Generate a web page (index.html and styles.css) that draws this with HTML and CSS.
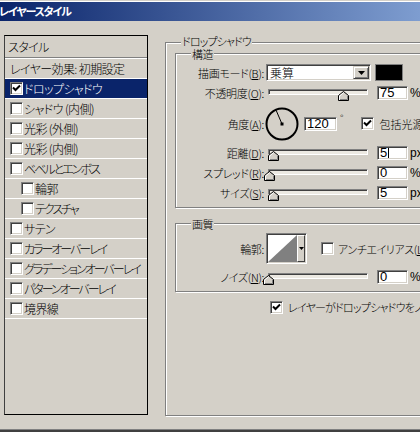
FILE: index.html
```html
<!DOCTYPE html>
<html lang="ja">
<head>
<meta charset="utf-8">
<title>レイヤースタイル</title>
<link rel="stylesheet" href="styles.css">
</head>
<body>
<div class="window">
  <div class="titlebar"><span class="title">レイヤースタイル</span></div>
  <div class="main">
    <div class="styles-panel">
      <div class="panel-head">スタイル</div>
      <ul class="style-list">
        <li class="item plain">レイヤー効果: 初期設定</li>
        <li class="item selected"><span class="cb"><svg width="11" height="11" viewBox="0 0 11 11"><polyline points="2,4.5 4.5,7 9,2.5" fill="none" stroke="#000" stroke-width="2"/></svg></span>ドロップシャドウ</li>
        <li class="item"><span class="cb"></span>シャドウ&nbsp;(内側)</li>
        <li class="item"><span class="cb"></span>光彩&nbsp;(外側)</li>
        <li class="item"><span class="cb"></span>光彩&nbsp;(内側)</li>
        <li class="item kana"><span class="cb"></span>ベベルとエンボス</li>
        <li class="item indent"><span class="cb"></span>輪郭</li>
        <li class="item indent kana"><span class="cb"></span>テクスチャ</li>
        <li class="item"><span class="cb"></span>サテン</li>
        <li class="item kana"><span class="cb"></span>カラーオーバーレイ</li>
        <li class="item kana"><span class="cb"></span>グラデーションオーバーレイ</li>
        <li class="item kana"><span class="cb"></span>パターンオーバーレイ</li>
        <li class="item"><span class="cb"></span>境界線</li>
      </ul>
    </div>

    <div class="settings">
      <div class="group outer">
        <span class="legend">ドロップシャドウ</span>

        <div class="group structure">
          <span class="legend">構造</span>

          <div class="row row-mode">
            <span class="lbl">描画モード(<u>B</u>):</span>
            <div class="select">
              <span class="select-value">乗算</span>
              <span class="drop-btn"><svg width="7" height="4" viewBox="0 0 7 4"><polygon points="0,0 7,0 3.5,4" fill="#000"/></svg></span>
            </div>
            <span class="swatch"></span>
          </div>

          <div class="row row-slider first">
            <span class="lbl">不透明度(<u>O</u>):</span>
            <div class="slider">
              <div class="track"></div>
              <span class="thumb" style="left:75%"><svg width="11" height="10" viewBox="0 0 11 10"><polygon points="0.5,9.5 0.5,4.5 5.5,0.5 10.5,4.5 10.5,9.5" fill="#d4d0c8" stroke="#000"/><polyline points="1.5,9 1.5,5 5.5,1.8" fill="none" stroke="#fff"/><polyline points="2,8.5 9.5,8.5 9.5,5" fill="none" stroke="#808080"/></svg></span>
            </div>
            <span class="field">75</span>
            <span class="unit">%</span>
          </div>

          <div class="row row-angle">
            <span class="lbl">角度(<u>A</u>):</span>
            <svg class="dial" width="34" height="34" viewBox="0 0 34 34"><circle cx="17" cy="17" r="15.5" fill="none" stroke="#000" stroke-width="2"/><line x1="17" y1="17" x2="11" y2="3" stroke="#000" stroke-width="1"/><rect x="15.5" y="15.5" width="3" height="3" fill="#000"/></svg>
            <span class="field angle">120</span>
            <span class="deg">°</span>
            <span class="cb global"><svg width="11" height="11" viewBox="0 0 11 11"><polyline points="2,4.5 4.5,7 9,2.5" fill="none" stroke="#000" stroke-width="2"/></svg></span>
            <span class="cb-text">包括光源を使用</span>
          </div>

          <div class="row row-slider">
            <span class="lbl">距離(<u>D</u>):</span>
            <div class="slider">
              <div class="track"></div>
              <span class="thumb" style="left:5%"><svg width="11" height="10" viewBox="0 0 11 10"><polygon points="0.5,9.5 0.5,4.5 5.5,0.5 10.5,4.5 10.5,9.5" fill="#d4d0c8" stroke="#000"/><polyline points="1.5,9 1.5,5 5.5,1.8" fill="none" stroke="#fff"/><polyline points="2,8.5 9.5,8.5 9.5,5" fill="none" stroke="#808080"/></svg></span>
            </div>
            <span class="field">5<span class="caret"></span></span>
            <span class="unit">px</span>
          </div>

          <div class="row row-slider">
            <span class="lbl">スプレッド(<u>R</u>):</span>
            <div class="slider">
              <div class="track"></div>
              <span class="thumb" style="left:1%"><svg width="11" height="10" viewBox="0 0 11 10"><polygon points="0.5,9.5 0.5,4.5 5.5,0.5 10.5,4.5 10.5,9.5" fill="#d4d0c8" stroke="#000"/><polyline points="1.5,9 1.5,5 5.5,1.8" fill="none" stroke="#fff"/><polyline points="2,8.5 9.5,8.5 9.5,5" fill="none" stroke="#808080"/></svg></span>
            </div>
            <span class="field">0</span>
            <span class="unit">%</span>
          </div>

          <div class="row row-slider">
            <span class="lbl">サイズ(<u>S</u>):</span>
            <div class="slider">
              <div class="track"></div>
              <span class="thumb" style="left:5%"><svg width="11" height="10" viewBox="0 0 11 10"><polygon points="0.5,9.5 0.5,4.5 5.5,0.5 10.5,4.5 10.5,9.5" fill="#d4d0c8" stroke="#000"/><polyline points="1.5,9 1.5,5 5.5,1.8" fill="none" stroke="#fff"/><polyline points="2,8.5 9.5,8.5 9.5,5" fill="none" stroke="#808080"/></svg></span>
            </div>
            <span class="field">5</span>
            <span class="unit">px</span>
          </div>
        </div>

        <div class="group quality">
          <span class="legend">画質</span>

          <div class="row row-contour">
            <span class="lbl">輪郭:</span>
            <div class="contour">
              <svg class="contour-preview" width="29" height="27" viewBox="0 0 29 27"><rect width="29" height="27" fill="#fff"/><polygon points="0,27 29,0 29,27" fill="#808080"/></svg>
              <span class="contour-btn"><svg width="5" height="3" viewBox="0 0 5 3"><polygon points="0,0 5,0 2.5,3" fill="#000"/></svg></span>
            </div>
            <span class="cb aa"></span>
            <span class="cb-text">アンチエイリアス(<u>L</u>)</span>
          </div>

          <div class="row row-slider">
            <span class="lbl">ノイズ(<u>N</u>):</span>
            <div class="slider">
              <div class="track"></div>
              <span class="thumb" style="left:0%"><svg width="11" height="10" viewBox="0 0 11 10"><polygon points="0.5,9.5 0.5,4.5 5.5,0.5 10.5,4.5 10.5,9.5" fill="#d4d0c8" stroke="#000"/><polyline points="1.5,9 1.5,5 5.5,1.8" fill="none" stroke="#fff"/><polyline points="2,8.5 9.5,8.5 9.5,5" fill="none" stroke="#808080"/></svg></span>
            </div>
            <span class="field">0</span>
            <span class="unit">%</span>
          </div>
        </div>

        <div class="row knockout">
          <span class="cb"><svg width="11" height="11" viewBox="0 0 11 11"><polyline points="2,4.5 4.5,7 9,2.5" fill="none" stroke="#000" stroke-width="2"/></svg></span>
          <span class="cb-text">レイヤーがドロップシャドウをノックアウト</span>
        </div>
      </div>
    </div>
  </div>
</div>
</body>
</html>
```
FILE: styles.css
```css
* { box-sizing: border-box; }
html, body { margin: 0; padding: 0; }
body {
  width: 420px;
  height: 432px;
  overflow: hidden;
  background: #d4d0c8;
  font-family: "Noto Sans CJK JP", "Noto Sans", sans-serif;
  font-size: 12px;
  font-weight: 300;
  font-feature-settings: "palt";
  color: #000;
}
u { text-decoration: underline; text-underline-offset: 1px; }

.window {
  height: 432px;
  display: flex;
  flex-direction: column;
  border-bottom: 2px solid #404040;
  box-shadow: inset 0 -1px #808080;
  overflow: hidden;
}

.titlebar {
  margin-top: 1px;
  border-top: 1px solid #fff;
  height: 20px;
  flex: none;
  background: linear-gradient(to right, #0a246a, #7e9dd0);
  color: #fff;
  font-size: 11px;
  font-weight: bold;
  letter-spacing: -1.2px;
  line-height: 18px;
  white-space: nowrap;
}
.title { margin-left: -1px; }

.main {
  display: flex;
  padding: 14px 0 0 4px;
}

/* left styles list */
.styles-panel {
  flex: none;
  width: 144px;
  height: 380px;
  border: 1px solid #000;
  border-left-color: #404040;
  overflow: hidden;
}
.panel-head {
  height: 22px;
  line-height: 20px;
  padding: 1px 0 0 3px;
  letter-spacing: -0.6px;
  border-bottom: 1px solid #808080;
}
.style-list {
  list-style: none;
  margin: 0;
  padding: 0;
  border-top: 1px solid #fff;
}
.item {
  height: 20px;
  border-bottom: 1px solid #fff;
  display: flex;
  align-items: center;
  padding-left: 5px;
  white-space: nowrap;
  line-height: 14px;
  letter-spacing: -0.6px;
}
.item.kana { letter-spacing: -2px; }
.item .cb { margin-right: 1px; }
.item.indent { padding-left: 16px; }
.item.selected { background: #0a246a; color: #fff; }

/* checkbox */
.cb {
  flex: none;
  width: 13px;
  height: 13px;
  display: inline-flex;
  align-items: center;
  justify-content: center;
  background: #fff;
  border: 1px solid;
  border-color: #808080 #fff #fff #808080;
  box-shadow: inset 1px 1px #404040, inset -1px -1px #d4d0c8;
  letter-spacing: 0;
}
.cb svg { display: block; }
.cb-text { white-space: nowrap; line-height: 14px; }

/* right settings */
.settings {
  margin-left: 17px;
  padding-top: 7px;
  font-size: 11px;
}
.group {
  position: relative;
  border: 1px solid #808080;
  box-shadow: inset 1px 1px #fff, 1px 1px #fff;
}
.legend {
  position: absolute;
  top: -6px;
  left: 15px;
  padding: 0 1px;
  height: 12px;
  line-height: 12px;
  background: #d4d0c8;
  white-space: nowrap;
  letter-spacing: -0.4px;
}
.outer {
  width: 300px;
  height: 374px;
  padding: 10px 0 0 9px;
}
.outer > .legend {
  top: -8px;
  letter-spacing: -0.9px;
}
.structure {
  width: 300px;
  height: 155px;
  padding-top: 10px;
}
.quality {
  width: 300px;
  height: 69px;
  margin-top: 15px;
  padding-top: 9px;
}

.row {
  display: flex;
  align-items: center;
  white-space: nowrap;
}
.lbl {
  flex: none;
  width: 88px;
  text-align: right;
  line-height: 14px;
  letter-spacing: -0.3px;
}

/* sunken field look */
.select, .field, .contour {
  border: 1px solid;
  border-color: #808080 #fff #fff #808080;
  box-shadow: inset 1px 1px #404040, inset -1px -1px #d4d0c8;
}

.row-mode { height: 17px; }
.select {
  flex: none;
  margin-left: 2px;
  width: 105px;
  height: 17px;
  background: #fff;
  display: flex;
  align-items: center;
  font-size: 12px;
}
.select-value { padding-left: 3px; line-height: 14px; }
.drop-btn {
  margin-left: auto;
  margin-right: 1px;
  width: 16px;
  height: 13px;
  display: flex;
  align-items: center;
  justify-content: center;
  background: #d4d0c8;
  border: 1px solid;
  border-color: #d4d0c8 #404040 #404040 #d4d0c8;
  box-shadow: inset 1px 1px #fff, inset -1px -1px #808080;
}
.drop-btn svg { display: block; }
.swatch {
  flex: none;
  margin-left: 4px;
  width: 28px;
  height: 17px;
  background: #000;
  border: 1px solid #808080;
}

.row-slider { height: 14px; margin-top: 6px; }
.row-slider.first { margin-top: 5px; }
.slider {
  flex: none;
  position: relative;
  margin-left: 4px;
  width: 100px;
  height: 14px;
}
.track {
  margin-top: 3px;
  height: 6px;
  border: 1px solid;
  border-color: #808080 #fff #fff #808080;
  box-shadow: inset 1px 1px #404040;
  background: #ece9e2;
}
.thumb {
  position: absolute;
  top: 5px;
  width: 11px;
  height: 10px;
  margin-left: -5px;
}
.thumb svg { display: block; }

.field {
  flex: none;
  margin-left: 9px;
  width: 31px;
  height: 14px;
  background: #fff;
  padding-left: 2px;
  font-family: "Liberation Sans", Arial, sans-serif;
  font-weight: normal;
  font-size: 13px;
  line-height: 12px;
  display: flex;
  align-items: center;
}
.caret {
  display: inline-block;
  width: 1px;
  height: 10px;
  background: #000;
  margin-left: 1px;
}
.unit {
  margin-left: 2px;
  font-family: "Liberation Sans", Arial, sans-serif;
  font-weight: normal;
  font-size: 12px;
}

.row-angle { height: 33px; margin-top: 7px; }
.dial { flex: none; margin-left: 1px; display: block; }
.field.angle { margin-left: 5px; width: 33px; }
.deg {
  align-self: flex-start;
  margin-top: 6px;
  margin-left: 3px;
  font-size: 10px;
  line-height: 10px;
}
.cb.global { margin-left: 17px; }
.row-angle .cb-text { margin-left: 6px; }

.row-contour { height: 31px; }
.contour {
  flex: none;
  margin-left: 2px;
  width: 41px;
  height: 31px;
  display: flex;
  padding: 1px;
  background: #d4d0c8;
}
.contour-preview { display: block; flex: none; }
.contour-btn {
  flex: 1;
  display: flex;
  align-items: center;
  justify-content: center;
  background: #d4d0c8;
  border: 1px solid;
  border-color: #fff #404040 #404040 #fff;
}
.contour-btn svg { display: block; }
.cb.aa { margin-left: 14px; }
.row-contour .cb-text { margin-left: 4px; letter-spacing: -0.4px; }

.knockout {
  margin-top: 8px;
  padding-left: 95px;
}
.knockout .cb-text { margin-left: 5px; letter-spacing: -0.8px; }
```
